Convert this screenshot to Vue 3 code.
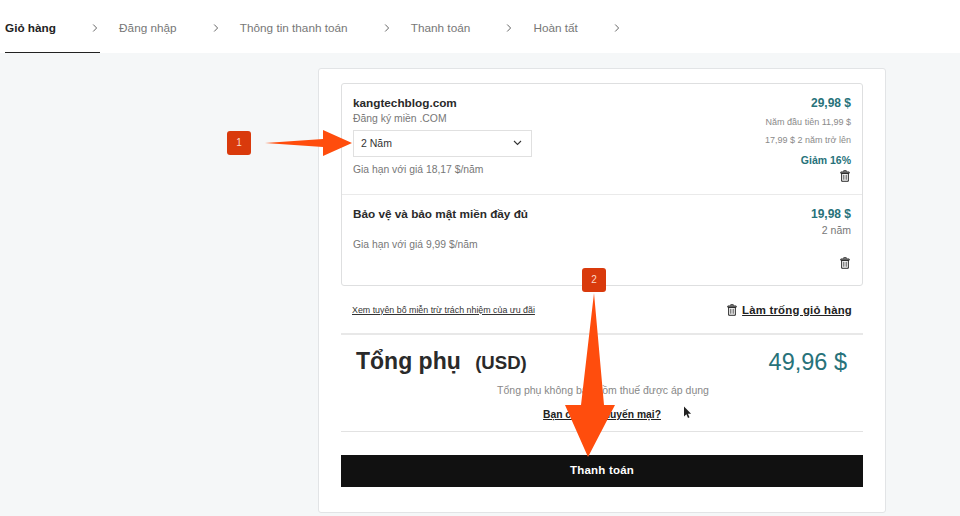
<template>
  <div class="page">
    <svg class="defs" width="0" height="0">
      <symbol id="trash" viewBox="0 0 12 14">
        <path d="M4.4 1.6V.7h3.2v.9M1 2.2h10v1.5H1zM2 3.7h8v9.6H2z" fill="none" stroke="currentColor" stroke-width="1.2" />
        <path d="M4.6 5.5v6M7.4 5.5v6" stroke="currentColor" stroke-width="1" />
      </symbol>
    </svg>

    <nav class="topbar">
      <div v-for="(s, i) in steps" :key="s" class="step" :class="{ active: i === 0 }">
        <span>{{ s }}</span>
        <svg class="chev" width="6" height="10" viewBox="0 0 6 10">
          <path d="M1.2 1.5L4.6 5 1.2 8.5" fill="none" stroke="currentColor" stroke-width="1" />
        </svg>
      </div>
    </nav>

    <main class="main">
      <section class="card">
        <div class="items">
          <div class="item first">
            <div class="item-left">
              <div class="name">kangtechblog.com</div>
              <div class="sub">Đăng ký miền .COM</div>
              <div class="select">
                <span>2 Năm</span>
                <svg width="9" height="6" viewBox="0 0 9 6">
                  <path d="M1 1l3.5 3.5L8 1" fill="none" stroke="#333" stroke-width="1.1" />
                </svg>
              </div>
              <div class="renew">Gia hạn với giá 18,17 $/năm</div>
            </div>
            <div class="item-right">
              <div class="price">29,98 $</div>
              <div class="small l1">Năm đầu tiên 11,99 $</div>
              <div class="small l2">17,99 $ 2 năm trở lên</div>
              <div class="off">Giảm 16%</div>
              <svg class="trash" width="10" height="12"><use href="#trash" /></svg>
            </div>
          </div>
          <div class="item second">
            <div class="item-left">
              <div class="name">Bảo vệ và bảo mật miền đầy đủ</div>
              <div class="renew r2">Gia hạn với giá 9,99 $/năm</div>
            </div>
            <div class="item-right">
              <div class="price">19,98 $</div>
              <div class="years">2 năm</div>
              <svg class="trash t2" width="10" height="12"><use href="#trash" /></svg>
            </div>
          </div>
        </div>

        <div class="links">
          <a class="terms">Xem tuyên bố miễn trừ trách nhiệm của ưu đãi</a>
          <div class="empty">
            <svg width="10" height="12"><use href="#trash" /></svg>
            <a>Làm trống giỏ hàng</a>
          </div>
        </div>

        <div class="totals">
          <div class="total-row">
            <div class="total-label">Tổng phụ <span>(USD)</span></div>
            <div class="total-value">49,96 $</div>
          </div>
          <div class="note">Tổng phụ không bao gồm thuế được áp dụng</div>
          <a class="promo">Bạn có mã khuyến mại?</a>
        </div>

        <button class="pay">Thanh toán</button>
      </section>
    </main>

    <!-- annotations drawn on top of the screenshot -->
    <div class="badge b1">1</div>
    <div class="badge b2">2</div>
    <svg class="overlay" width="960" height="516" viewBox="0 0 960 516">
      <polygon points="265,143 323,139 323,130 352,143 323,156 323,147" fill="#ff4d0d" />
      <polygon points="594,293 604,405 615,405 588,457 565,405 581,405" fill="#ff4d0d" />
      <path d="M684 406.5v10l2.4-2.2 1.6 3.6 1.5-.7-1.6-3.5h3.2z" fill="#222" />
    </svg>
  </div>
</template>

<script setup>
const steps = ['Giỏ hàng', 'Đăng nhập', 'Thông tin thanh toán', 'Thanh toán', 'Hoàn tất']
</script>

<style>
body {
  margin: 0;
}
</style>

<style scoped>
.page {
  position: relative;
  height: 516px;
  overflow: hidden;
  background: #f5f7f8;
  font-family: "Liberation Sans", Arial, sans-serif;
  color: #222;
}
.defs {
  position: absolute;
}
.topbar {
  display: flex;
  height: 53px;
  padding-left: 5px;
  box-sizing: border-box;
  background: #fff;
}
.step {
  display: flex;
  align-items: center;
  height: 53px;
  padding-top: 2px;
  box-sizing: border-box;
  margin-right: 18.7px;
  padding-right: 2.5px;
  font-size: 11.75px;
  color: #777;
}
.step.active {
  padding-top: 3px;
  color: #222;
  font-weight: bold;
  border-bottom: 1px solid #222;
}
.chev {
  margin-left: 36px;
  color: #666;
}
.main {
  padding: 15px 0 0 318px;
}
.card {
  width: 568px;
  height: 445px;
  box-sizing: border-box;
  padding: 14px 22px 0;
  background: #fff;
  border: 1px solid #e2e4e6;
  border-radius: 3px;
}
.items {
  border: 1px solid #dedfe0;
  border-radius: 3px;
}
.item {
  display: flex;
  justify-content: space-between;
  padding: 0 11px;
}
.first {
  height: 110px;
  border-bottom: 1px solid #eaeaea;
}
.second {
  height: 90px;
}
.item-left {
  display: flex;
  flex-direction: column;
  align-items: flex-start;
}
.name {
  margin-top: 11px;
  font-size: 11.75px;
  line-height: 16px;
  font-weight: bold;
  color: #2a2a2a;
}
.second .name {
  margin-top: 11px;
}
.sub {
  margin-top: 1px;
  font-size: 10.4px;
  line-height: 14px;
  color: #777;
}
.select {
  display: flex;
  justify-content: space-between;
  align-items: center;
  width: 179px;
  height: 27px;
  margin-top: 4px;
  padding: 0 9px 1px 7px;
  box-sizing: border-box;
  border: 1px solid #e0e0e0;
  font-size: 10.5px;
  color: #333;
}
.renew {
  margin-top: 6px;
  font-size: 10.35px;
  line-height: 14px;
  color: #777;
}
.r2 {
  margin-top: 16px;
}
.item-right {
  display: flex;
  flex-direction: column;
  align-items: flex-end;
}
.price {
  margin-top: 11px;
  font-size: 12px;
  line-height: 16px;
  font-weight: bold;
  color: #27727a;
}
.small {
  font-size: 9px;
  line-height: 12px;
  color: #8a8a8a;
}
.l1 {
  margin-top: 5px;
}
.l2 {
  margin-top: 6px;
}
.off {
  margin-top: 7px;
  font-size: 10.5px;
  line-height: 14px;
  font-weight: bold;
  color: #27727a;
}
.years {
  font-size: 10.5px;
  line-height: 16px;
  color: #777;
}
.trash {
  margin-top: 3px;
  margin-right: 1px;
  color: #222;
}
.t2 {
  margin-top: 19px;
}
.links {
  display: flex;
  justify-content: space-between;
  align-items: center;
  height: 47px;
  padding: 0 11px;
  border-bottom: 2px solid #e8e8e8;
}
.terms {
  font-size: 8.85px;
  text-decoration: underline;
  color: #333;
}
.empty {
  display: flex;
  align-items: center;
  gap: 5px;
  font-size: 11.4px;
  font-weight: bold;
  letter-spacing: 0.2px;
  color: #222;
}
.empty a {
  text-decoration: underline;
}
.totals {
  display: flex;
  flex-direction: column;
  align-items: center;
  height: 96px;
  border-bottom: 1px solid #e2e2e2;
}
.total-row {
  display: flex;
  justify-content: space-between;
  align-items: center;
  align-self: stretch;
  height: 28px;
  margin-top: 13px;
  padding: 0 16px 0 15px;
}
.total-label {
  padding-bottom: 2px;
  font-size: 23px;
  font-weight: bold;
  color: #2a2a2a;
  white-space: pre-wrap;
}
.total-label span {
  margin-left: 8px;
  font-size: 18.6px;
}
.total-value {
  font-size: 23.5px;
  color: #27727a;
}
.note {
  margin-top: 7px;
  padding-left: 2px;
  font-size: 10.5px;
  line-height: 14px;
  color: #888;
}
.promo {
  margin-top: 11px;
  font-size: 10.3px;
  line-height: 14px;
  font-weight: bold;
  text-decoration: underline;
  color: #222;
}
.pay {
  display: block;
  width: 100%;
  height: 32px;
  margin-top: 23px;
  padding: 0 0 2px;
  border: 0;
  background: #111;
  color: #fff;
  font-family: inherit;
  font-size: 11.5px;
  font-weight: bold;
  letter-spacing: 0.2px;
}
.badge {
  position: absolute;
  width: 24px;
  height: 24px;
  border-radius: 3px;
  background: #d93a0c;
  color: #fbd9c8;
  font-size: 10px;
  line-height: 24px;
  text-align: center;
}
.b1 {
  left: 227px;
  top: 131px;
}
.b2 {
  left: 582px;
  top: 268px;
}
.overlay {
  position: absolute;
  left: 0;
  top: 0;
  pointer-events: none;
}
</style>
